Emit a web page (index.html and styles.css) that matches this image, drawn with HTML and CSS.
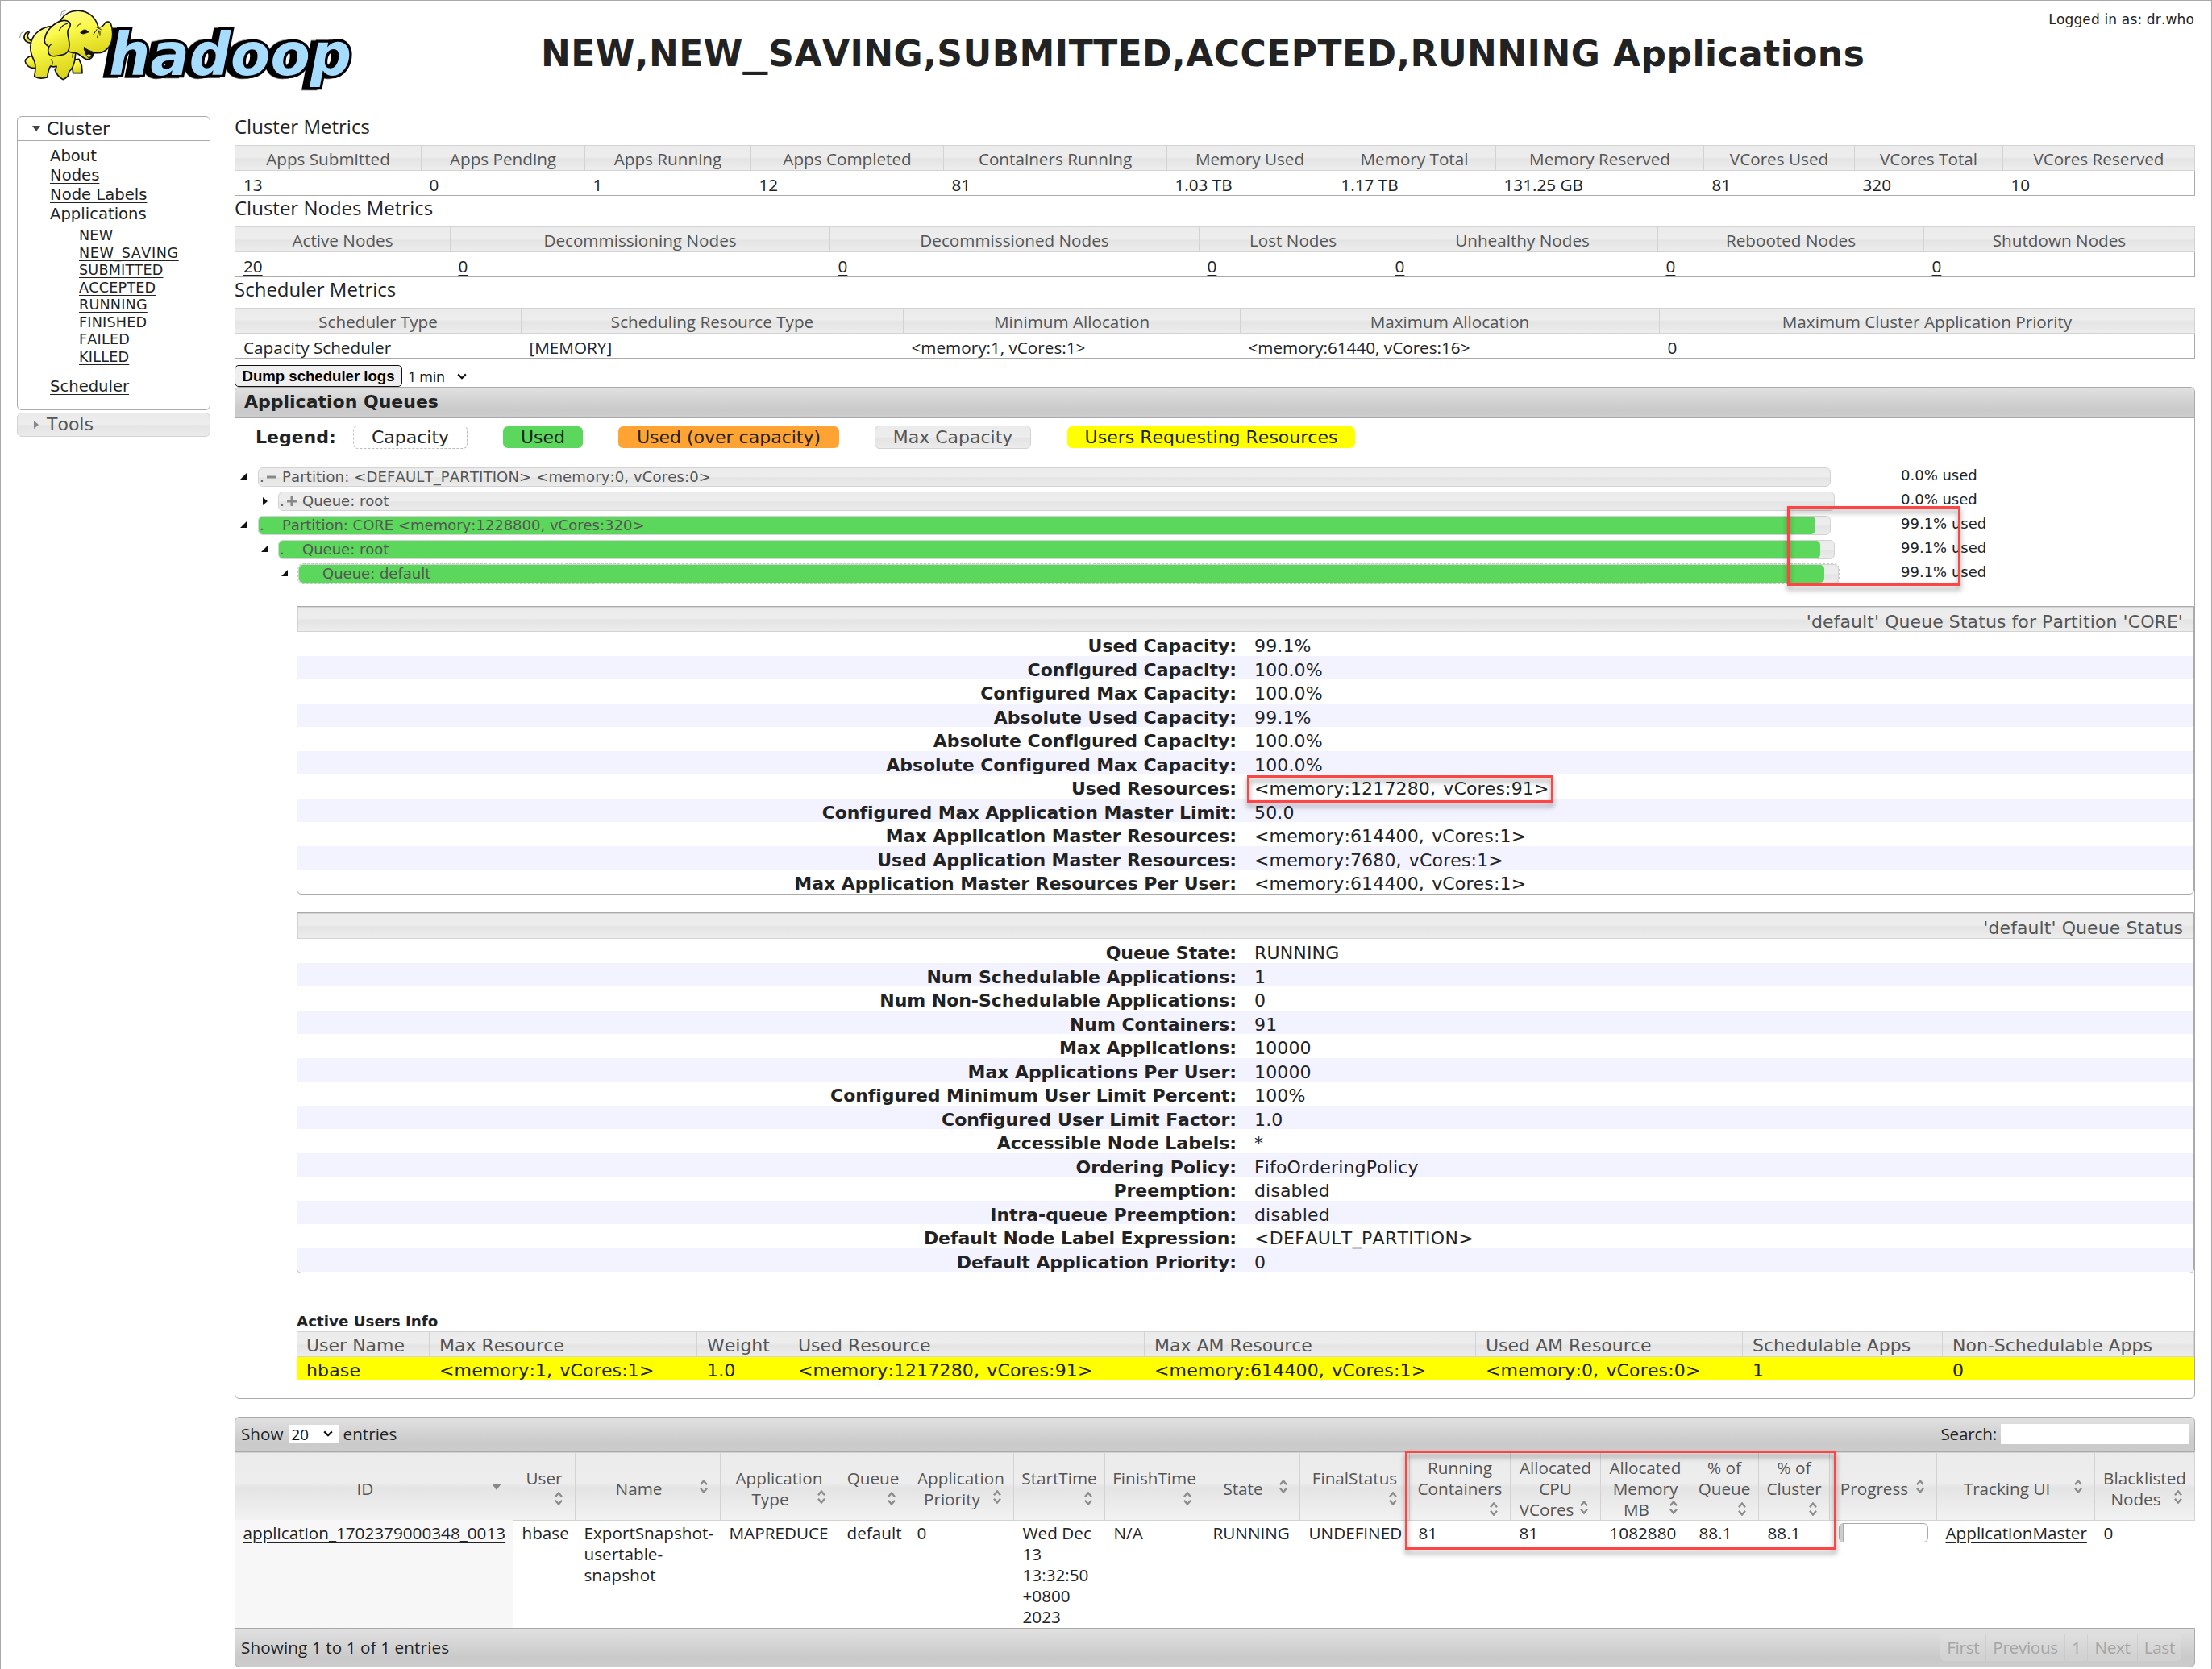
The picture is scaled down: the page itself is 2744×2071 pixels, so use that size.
FILE: index.html
```html
<!DOCTYPE html>
<html lang="en">
<head>
<meta charset="utf-8">
<title>NEW,NEW_SAVING,SUBMITTED,ACCEPTED,RUNNING Applications</title>
<link rel="stylesheet" href="styles.css">
</head>
<body>
<svg class="defs" width="0" height="0" aria-hidden="true">
  <symbol id="sort" viewBox="0 0 12 17">
    <path d="M2 6.2 6 1.4 10 6.2M2 10.8 6 15.6 10 10.8" fill="none" stroke="#8c8c8c" stroke-width="2.3"/>
  </symbol>
  <symbol id="chev" viewBox="0 0 12 8">
    <path d="M1.2 1.4 6 6.2 10.8 1.4" fill="none" stroke="#111" stroke-width="2.2"/>
  </symbol>
</svg>
<div class="page">
  <header class="top">
    <svg class="logo" viewBox="0 0 1290 336" role="img" aria-label="hadoop">
      <defs>
        <linearGradient id="skin" x1="0" y1="0" x2=".3" y2="1"><stop offset="0" stop-color="#fffd9a"/><stop offset=".45" stop-color="#fbf94a"/><stop offset="1" stop-color="#dcd71c"/></linearGradient>
      </defs>
      <text class="word" x="346" y="260" textLength="902" lengthAdjust="spacingAndGlyphs">hadoop</text>
      <g fill="url(#skin)" stroke="#111" stroke-width="5" stroke-linejoin="round" stroke-linecap="round">
        <path d="M57 142C40 142 28 132 30 118 31 106 40 99 49 102 44 108 40 114 44 121 48 130 55 134 61 134"/>
        <path d="M206 206 212 254 246 254 244 226 234 202Z"/>
        <path d="M80 188 50 192C36 200 30 208 36 217 42 228 56 236 70 236L84 230"/>
        <path d="M133 80C100 82 66 102 56 138 50 160 56 188 68 210 74 226 72 248 68 266 82 276 100 274 116 270 118 254 120 240 128 228 136 232 146 230 150 228 152 236 146 238 144 240 148 254 158 268 174 278 182 276 188 270 192 266 196 258 194 254 198 248 208 240 214 224 218 208 220 196 220 188 222 178L170 84Z"/>
        <path d="M133 80C150 72 160 66 168 54 182 32 206 20 236 22 268 24 296 44 306 84 318 84 326 78 332 66 338 60 350 64 352 70 364 104 360 138 344 158 332 174 312 182 290 178 288 194 276 206 260 202 250 198 240 188 226 180 212 180 204 178 196 174"/>
        <path d="M133 80C150 66 172 54 190 60 204 66 206 74 194 92 186 102 198 124 198 150 198 170 188 184 172 186 158 188 142 194 130 190 120 186 116 172 122 156 108 148 102 136 108 120 112 104 120 92 133 80Z"/>
        <path d="M160 96C168 80 176 72 190 70M122 156C126 150 130 148 132 146M132 228C140 212 134 208 130 204M214 176C210 184 208 188 210 196" fill="none" stroke-width="3.5"/>
        <path d="M300 84 316 92M300 92 288 110M308 96 302 122M312 98 312 114M226 84C230 74 236 70 242 72" fill="none" stroke-width="3"/>
        <path d="M240 104C244 92 258 90 264 96L270 102 258 106C250 110 244 108 240 104Z" fill="#111" stroke-width="2"/>
        <path d="M254 158C262 168 274 170 288 176 288 188 280 198 268 196 258 192 262 176 254 168Z" fill="#111" stroke-width="3"/>
        <path d="M262 188C268 182 276 184 280 190 276 196 266 196 262 188Z" fill="#f4f03a" stroke="none"/>
        <path d="M166 42 170 26 184 22M174 34 180 28M14 122 18 106 28 100" fill="none" stroke="#999" stroke-width="3"/>
      </g>
    </svg>
    <h1>NEW,NEW<i class="us">_</i>SAVING,SUBMITTED,ACCEPTED,RUNNING Applications</h1>
    <div class="login">Logged in as: dr.who</div>
  </header>

  <div class="body">
    <nav class="side">
      <section class="side-box">
        <h2><svg width="10" height="7" viewBox="0 0 10 7"><path d="M0 0H10L5 7Z" fill="#444"/></svg>Cluster</h2>
        <ul>
          <li><a>About</a></li>
          <li><a>Nodes</a></li>
          <li><a>Node Labels</a></li>
          <li><a>Applications</a>
            <ul>
              <li><a>NEW</a></li>
              <li><a class="wide">NEW_SAVING</a></li>
              <li><a>SUBMITTED</a></li>
              <li><a>ACCEPTED</a></li>
              <li><a>RUNNING</a></li>
              <li><a>FINISHED</a></li>
              <li><a>FAILED</a></li>
              <li><a>KILLED</a></li>
            </ul>
          </li>
          <li><a>Scheduler</a></li>
        </ul>
      </section>
      <h2 class="tools"><svg width="7" height="10" viewBox="0 0 7 10"><path d="M0 0V10L6 5Z" fill="#888"/></svg>Tools</h2>
    </nav>

    <main>
      <h3>Cluster Metrics</h3>
      <div class="metrics m1">
        <b>Apps Submitted</b><b>Apps Pending</b><b>Apps Running</b><b>Apps Completed</b><b>Containers Running</b><b>Memory Used</b><b>Memory Total</b><b>Memory Reserved</b><b>VCores Used</b><b>VCores Total</b><b>VCores Reserved</b>
        <span>13</span><span>0</span><span>1</span><span>12</span><span>81</span><span>1.03 TB</span><span>1.17 TB</span><span>131.25 GB</span><span>81</span><span>320</span><span>10</span>
      </div>
      <h3>Cluster Nodes Metrics</h3>
      <div class="metrics m2">
        <b>Active Nodes</b><b>Decommissioning Nodes</b><b>Decommissioned Nodes</b><b>Lost Nodes</b><b>Unhealthy Nodes</b><b>Rebooted Nodes</b><b>Shutdown Nodes</b>
        <span><a>20</a></span><span><a>0</a></span><span><a>0</a></span><span><a>0</a></span><span><a>0</a></span><span><a>0</a></span><span><a>0</a></span>
      </div>
      <h3>Scheduler Metrics</h3>
      <div class="metrics m3">
        <b>Scheduler Type</b><b>Scheduling Resource Type</b><b>Minimum Allocation</b><b>Maximum Allocation</b><b>Maximum Cluster Application Priority</b>
        <span>Capacity Scheduler</span><span>[MEMORY]</span><span>&lt;memory:1, vCores:1&gt;</span><span>&lt;memory:61440, vCores:16&gt;</span><span>0</span>
      </div>

      <div class="dump">
        <button>Dump scheduler logs</button>
        <span>1 min</span>
        <svg width="12" height="8"><use href="#chev"/></svg>
      </div>

      <section class="queues">
        <h4>Application Queues</h4>
        <div class="legend">
          <strong>Legend:</strong>
          <span class="lg cap">Capacity</span>
          <span class="lg used">Used</span>
          <span class="lg over">Used (over capacity)</span>
          <span class="lg max">Max Capacity</span>
          <span class="lg req">Users Requesting Resources</span>
        </div>

        <div class="tree">
          <div class="row l1">
            <i class="arrow"><svg width="8" height="8"><path d="M8 0V8H0Z"/></svg></i>
            <div class="bar"><div class="fill none"><span class="pre">.<svg width="13" height="14"><path d="M1 7H13" stroke="#888" stroke-width="3"/></svg></span><span class="part">Partition: &lt;DEFAULT_PARTITION&gt; &lt;memory:0, vCores:0&gt;</span></div></div>
            <span class="pct">0.0% used</span>
          </div>
          <div class="row l2">
            <i class="arrow"><svg width="6" height="10"><path d="M0 0V10L6 5Z"/></svg></i>
            <div class="bar"><div class="fill none"><span class="pre">.<svg width="13" height="14"><path d="M1 7H13M7 1V13" stroke="#888" stroke-width="3"/></svg></span>Queue: root</div></div>
            <span class="pct">0.0% used</span>
          </div>
          <div class="row l1">
            <i class="arrow"><svg width="8" height="8"><path d="M8 0V8H0Z"/></svg></i>
            <div class="bar"><div class="fill" style="width:99.1%"><span class="pre">.</span>Partition: CORE &lt;memory:1228800, vCores:320&gt;</div></div>
            <span class="pct">99.1% used</span>
          </div>
          <div class="row l2">
            <i class="arrow"><svg width="8" height="8"><path d="M8 0V8H0Z"/></svg></i>
            <div class="bar"><div class="fill" style="width:99.1%"><span class="pre">.</span>Queue: root</div></div>
            <span class="pct">99.1% used</span>
          </div>
          <div class="row l3">
            <i class="arrow"><svg width="8" height="8"><path d="M8 0V8H0Z"/></svg></i>
            <div class="bar leaf"><div class="fill" style="width:99.1%"><span class="pre"></span>Queue: default</div></div>
            <span class="pct">99.1% used</span>
          </div>
        </div>

        <div class="panel p1">
          <h5>'default' Queue Status for Partition 'CORE'</h5>
          <dl>
            <div><dt>Used Capacity:</dt><dd>99.1%</dd></div>
            <div><dt>Configured Capacity:</dt><dd>100.0%</dd></div>
            <div><dt>Configured Max Capacity:</dt><dd>100.0%</dd></div>
            <div><dt>Absolute Used Capacity:</dt><dd>99.1%</dd></div>
            <div><dt>Absolute Configured Capacity:</dt><dd>100.0%</dd></div>
            <div><dt>Absolute Configured Max Capacity:</dt><dd>100.0%</dd></div>
            <div><dt>Used Resources:</dt><dd>&lt;memory:1217280, vCores:91&gt;</dd></div>
            <div><dt>Configured Max Application Master Limit:</dt><dd>50.0</dd></div>
            <div><dt>Max Application Master Resources:</dt><dd>&lt;memory:614400, vCores:1&gt;</dd></div>
            <div><dt>Used Application Master Resources:</dt><dd>&lt;memory:7680, vCores:1&gt;</dd></div>
            <div><dt>Max Application Master Resources Per User:</dt><dd>&lt;memory:614400, vCores:1&gt;</dd></div>
          </dl>
        </div>

        <div class="panel p2">
          <h5>'default' Queue Status</h5>
          <dl>
            <div><dt>Queue State:</dt><dd>RUNNING</dd></div>
            <div><dt>Num Schedulable Applications:</dt><dd>1</dd></div>
            <div><dt>Num Non-Schedulable Applications:</dt><dd>0</dd></div>
            <div><dt>Num Containers:</dt><dd>91</dd></div>
            <div><dt>Max Applications:</dt><dd>10000</dd></div>
            <div><dt>Max Applications Per User:</dt><dd>10000</dd></div>
            <div><dt>Configured Minimum User Limit Percent:</dt><dd>100%</dd></div>
            <div><dt>Configured User Limit Factor:</dt><dd>1.0</dd></div>
            <div><dt>Accessible Node Labels:</dt><dd>*</dd></div>
            <div><dt>Ordering Policy:</dt><dd>FifoOrderingPolicy</dd></div>
            <div><dt>Preemption:</dt><dd>disabled</dd></div>
            <div><dt>Intra-queue Preemption:</dt><dd>disabled</dd></div>
            <div><dt>Default Node Label Expression:</dt><dd class="part">&lt;DEFAULT_PARTITION&gt;</dd></div>
            <div><dt>Default Application Priority:</dt><dd>0</dd></div>
          </dl>
        </div>

        <h6>Active Users Info</h6>
        <div class="users">
          <b>User Name</b><b>Max Resource</b><b>Weight</b><b>Used Resource</b><b>Max AM Resource</b><b>Used AM Resource</b><b>Schedulable Apps</b><b>Non-Schedulable Apps</b>
          <span>hbase</span><span>&lt;memory:1, vCores:1&gt;</span><span>1.0</span><span>&lt;memory:1217280, vCores:91&gt;</span><span>&lt;memory:614400, vCores:1&gt;</span><span>&lt;memory:0, vCores:0&gt;</span><span>1</span><span>0</span>
        </div>
      </section>

      <section class="apps">
        <div class="bar-top">
          <span>Show</span>
          <span class="select">20<svg width="12" height="8"><use href="#chev"/></svg></span>
          <span>entries</span>
          <span class="search">Search:</span>
          <span class="input"></span>
        </div>
        <div class="grid head">
          <div><p class="s"><span>ID</span><svg class="one" viewBox="0 0 12 17"><path d="M0 5H12L6 13Z" fill="#888"/></svg></p></div>
          <div><p>User</p><p class="s o"><span></span><svg><use href="#sort"/></svg></p></div>
          <div><p class="s"><span>Name</span><svg><use href="#sort"/></svg></p></div>
          <div><p>Application</p><p class="s"><span>Type</span><svg><use href="#sort"/></svg></p></div>
          <div><p>Queue</p><p class="s o"><span></span><svg><use href="#sort"/></svg></p></div>
          <div><p>Application</p><p class="s"><span>Priority</span><svg><use href="#sort"/></svg></p></div>
          <div><p>StartTime</p><p class="s o"><span></span><svg><use href="#sort"/></svg></p></div>
          <div><p>FinishTime</p><p class="s o"><span></span><svg><use href="#sort"/></svg></p></div>
          <div><p class="s"><span>State</span><svg><use href="#sort"/></svg></p></div>
          <div><p>FinalStatus</p><p class="s o"><span></span><svg><use href="#sort"/></svg></p></div>
          <div><p>Running</p><p>Containers</p><p class="s o"><span></span><svg><use href="#sort"/></svg></p></div>
          <div><p>Allocated</p><p>CPU</p><p class="s"><span>VCores</span><svg><use href="#sort"/></svg></p></div>
          <div><p>Allocated</p><p>Memory</p><p class="s"><span>MB</span><svg><use href="#sort"/></svg></p></div>
          <div><p>% of</p><p>Queue</p><p class="s o"><span></span><svg><use href="#sort"/></svg></p></div>
          <div><p>% of</p><p>Cluster</p><p class="s o"><span></span><svg><use href="#sort"/></svg></p></div>
          <div><p class="s"><span>Progress</span><svg><use href="#sort"/></svg></p></div>
          <div><p class="s"><span>Tracking UI</span><svg><use href="#sort"/></svg></p></div>
          <div><p>Blacklisted</p><p class="s"><span>Nodes</span><svg><use href="#sort"/></svg></p></div>
        </div>
        <div class="grid data">
          <div class="sorted"><a>application_1702379000348_0013</a></div>
          <div>hbase</div>
          <div>ExportSnapshot-<br>usertable-<br>snapshot</div>
          <div>MAPREDUCE</div>
          <div>default</div>
          <div>0</div>
          <div>Wed Dec<br>13<br>13:32:50<br>+0800<br>2023</div>
          <div>N/A</div>
          <div>RUNNING</div>
          <div>UNDEFINED</div>
          <div>81</div>
          <div>81</div>
          <div>1082880</div>
          <div>88.1</div>
          <div>88.1</div>
          <div><div class="progress"><i style="width:5%"></i></div></div>
          <div><a>ApplicationMaster</a></div>
          <div>0</div>
        </div>
        <div class="bar-bottom">
          <span>Showing 1 to 1 of 1 entries</span>
          <div class="pager"><span>First</span><span>Previous</span><span>1</span><span>Next</span><span>Last</span></div>
        </div>
      </section>
    </main>
  </div>

  <div class="mark mark-capacity"></div>
  <div class="mark mark-resources"></div>
  <div class="mark mark-alloc"></div>
</div>
</body>
</html>
```
FILE: styles.css
```css
* { box-sizing: border-box; }
body { margin: 0; background: #fff; }
h1, h2, h3, h4, h5, h6, p, ul, dl, dd { margin: 0; padding: 0; }
ul { list-style: none; }
svg { display: block; flex: none; }
a { text-decoration: underline; }
.defs { position: absolute; }

.page {
  position: relative;
  width: 2744px;
  height: 2071px;
  overflow: hidden;
  border: 1px solid #a9a9a9;
  border-bottom: 0;
  font-family: "DejaVu Sans", Verdana, sans-serif;
  font-size: 22px;
  font-kerning: none;
  color: #222;
}

/* header */
.top { display: flex; height: 141px; padding: 5px 21px 0 19px; }
.logo { width: 430px; height: 112px; overflow: visible; }
.word { font: italic bold 218px "DejaVu Sans", sans-serif; fill: #a5dcff; stroke: #000; stroke-width: 20; paint-order: stroke; filter: drop-shadow(-18px 2px 0 #000); }
h1 { margin-left: 221px; font-size: 44px; line-height: 60px; padding-top: 31px; height: 110px; letter-spacing: .45px; white-space: nowrap; }
.us { display: inline-block; font-style: normal; transform: scaleX(1.42); margin: 0 4.6px; }
.login { margin-left: auto; font-size: 17px; line-height: 20px; padding-top: 8px; letter-spacing: .15px; white-space: nowrap; }

/* sidebar */
.body { display: flex; }
.side { width: 240px; margin: 2px 30px 0 20px; flex: none; }
.side-box { height: 365px; border: 1px solid #aaa; border-radius: 6px; }
.side h2 { display: flex; align-items: center; font-size: 22px; font-weight: normal; line-height: 29px; padding-left: 18px; gap: 8px; }
.side-box h2 { height: 30px; border-bottom: 1px solid #aaa; }
.side-box > ul { padding: 7px 0 0 40px; font-size: 19.6px; line-height: 24px; }
.side-box ul ul { padding: 4px 0 14px 36px; font-size: 17.6px; line-height: 21.5px; letter-spacing: .2px; }
.side .wide { letter-spacing: .6px; }
.side a { text-decoration-thickness: 1px; text-underline-offset: 3px; }
.side .tools {
  margin-top: 3px; height: 30px; line-height: 28px; padding-left: 20px; gap: 9px; color: #555;
  border: 1px solid #d3d3d3; border-radius: 6px;
  background: linear-gradient(#ebebeb, #ededed 48%, #e4e4e4 54%, #ebebeb);
}

/* metrics */
main { width: 2432px; flex: none; font-family: "Open Sans", "Segoe UI", sans-serif; font-size: 20.7px; font-kerning: auto; }
h3 { font-size: 24px; font-weight: normal; line-height: 30px; height: 38px; white-space: nowrap; }
.metrics { display: grid; grid-template-rows: 32px 31px; height: 63px; border: 1px solid #aaa; border-width: 0 1px 1px; white-space: nowrap; }
.metrics b, .users b {
  font-weight: normal; color: #555;
  border: 1px solid #d3d3d3; border-left-width: 0;
  background: linear-gradient(#ebebeb, #ededed 45%, #e4e4e4 55%, #ededed);
}
.metrics b { text-align: center; line-height: 32px; margin-right: -1px; margin-left: 1px; }
.metrics b:first-child { border-left-width: 1px; margin-left: -1px; }
.metrics span { padding: 4px 0 0 10.5px; line-height: 26px; }
.metrics span:nth-of-type(1) { padding-left: 10px; }
.metrics a, .data a { text-decoration-thickness: 2px; text-underline-offset: 3px; }
.m1 { grid-template-columns: 230px 203px 206px 239px 277px 206px 202px 258px 187px 184px 238px; }
.m2 { grid-template-columns: 266px 471px 458px 233px 336px 330px 336px; }
.m3 { grid-template-columns: 354px 474px 418px 520px 664px; }

.dump { display: flex; align-items: center; height: 27px; margin-top: 8px; color: #111; }
.dump button { width: 208px; height: 27px; padding: 0; margin-right: 7px; border: 1.5px solid #111; border-radius: 5px; background: #efefef; font: bold 18.6px "Liberation Sans", Arial, sans-serif; color: #000; white-space: nowrap; }
.dump span { width: 61px; font-size: 18px; letter-spacing: -.3px; line-height: 26px; }

/* queues */
.queues { height: 1256px; border: 1px solid #aaa; border-radius: 6px; font-family: "DejaVu Sans", Verdana, sans-serif; font-size: 22px; font-kerning: none; }
h4 { height: 38px; line-height: 35px; padding-left: 11px; font-size: 22px; border-bottom: 2px solid #aaa; border-radius: 5px 5px 0 0; background: linear-gradient(#e1e1e1, #cacaca 75%, #cccccc); }
.legend { display: flex; align-items: center; height: 29px; margin-top: 9px; padding-left: 25px; }
.legend strong { width: 99px; margin-right: 22px; }
.lg { height: 27px; line-height: 27px; border-radius: 6px; text-align: center; white-space: nowrap; margin-right: 44px; }
.cap { width: 142px; height: 29px; border: 1px dashed #bbb; }
.used { width: 99px; background: #5bd75b; }
.over { width: 274px; background: #ffa333; }
.max { width: 194px; height: 29px; border: 1px solid #d3d3d3; color: #555; background: linear-gradient(#ebebeb, #ededed 48%, #e4e4e4 54%, #ebebeb); }
.req { width: 357px; margin-left: 1px; background: #ffff00; }

.tree { margin-top: 23px; font-size: 18px; }
.row { display: flex; height: 30px; white-space: nowrap; }
.arrow { display: flex; justify-content: flex-end; padding: 7px 13px 0 0; flex: none; }
.arrow path { fill: #111; }
.l1 .arrow { width: 28px; padding-right: 14px; } .l2 .arrow { width: 53px; } .l3 .arrow { width: 78px; }
.l1 .bar { width: 1951px; } .l2 .bar { width: 1931px; } .l3 .bar { width: 1911px; }
.bar { height: 24px; border: 1px solid #d3d3d3; border-radius: 6px; background: linear-gradient(#ebebeb, #ededed 48%, #e4e4e4 54%, #ebebeb); }
.bar.leaf { outline: 1px dashed #c4c4c4; outline-offset: 0; }
.fill { display: flex; height: 22px; line-height: 22px; border-radius: 5px; background: #5bd75b; color: #555; }
.fill.none { background: none; }
.pre { display: flex; align-items: center; width: 29px; padding-left: 1px; gap: 2px; }
.fill .part { letter-spacing: .15px; }
.pct { margin-left: auto; width: 364px; line-height: 20px; }

.panel { margin-left: 76px; border: 1px solid #aaa; border-radius: 0 0 6px 6px; overflow: hidden; white-space: nowrap; }
.p1 { margin-top: 22px; height: 358px; }
.p2 { margin-top: 22px; height: 448px; }
h5 { height: 31px; line-height: 35px; padding-right: 12px; text-align: right; font-size: 22px; font-weight: normal; letter-spacing: .08px; color: #555; border: 1px solid #d3d3d3; background: linear-gradient(#ebebeb, #ededed 45%, #e4e4e4 55%, #ededed); }
.p2 h5 { height: 32px; }
dl div { display: flex; height: 29.5px; padding-top: 7px; line-height: 22.5px; }
dl div:nth-child(even) { background: #f3f2ff; }
dt { width: 1165px; text-align: right; font-weight: bold; letter-spacing: -.05px; }
dd { padding-left: 22px; letter-spacing: .15px; word-spacing: 2px; }
dd.part { letter-spacing: .35px; }

h6 { margin: 48px 0 0 76px; height: 24px; line-height: 24px; font-size: 18.3px; }
.users { display: grid; grid-template-rows: 32px 29px; grid-template-columns: 165px 332px 113px 442px 411px 331px 248px 312px; margin-left: 76px; white-space: nowrap; }
.users b { line-height: 34px; padding-left: 12px; }
.users b:first-child { border-left-width: 1px; padding-left: 11px; }
.users span { background: #ffff00; padding: 5px 0 0 12px; line-height: 24px; letter-spacing: .15px; word-spacing: 2px; }

/* applications table */
.apps { margin-top: 22px; }
.bar-top, .bar-bottom { display: flex; border: 1px solid #aaa; background: linear-gradient(#e1e1e1, #cacaca 75%, #cccccc); line-height: 26px; }
.bar-top { height: 44px; align-items: center; padding: 0 7px 2px; border-radius: 6px 6px 0 0; }
.select { display: flex; align-items: center; justify-content: space-between; width: 62px; height: 23px; line-height: 23px; padding: 0 7px 0 4px; margin: 0 6px 0 6px; background: #fff; color: #111; font-size: 18.7px; }
.search { margin-left: auto; letter-spacing: -.2px; }
.input { width: 233px; height: 25px; margin-left: 5px; background: #fff; }
.grid { display: grid; grid-template-columns: 346px 77px 180px 146px 87px 131px 113px 123px 119px 136px 125px 112px 111px 85px 88px 133px 196px 124px; white-space: nowrap; line-height: 26px; }
.head { height: 84px; color: #555; }
.head > div { display: flex; flex-direction: column; justify-content: center; padding-top: 5px; text-align: center; border: 1px solid #d3d3d3; border-left-width: 0; background: linear-gradient(#ebebeb, #ededed 45%, #e4e4e4 52%, #f2f2f2); }
.head > div:first-child { border-left-width: 1px; }
.head .s { display: flex; align-items: center; height: 26px; }
.head .s span { flex: 1; }
.head svg { width: 12px; height: 17px; margin: -6px 14px 0 -4px; }
.head .o svg { margin-top: -2px; }
.data { height: 134px; }
.data > div { padding: 3px 0 0 10.5px; }
.data .sorted { background: #f7f7f7; }
.data .progress { width: 111px; height: 24px; margin-top: 1px; border: 1px solid #aaa; border-radius: 6px; overflow: hidden; }
.progress i { display: block; height: 100%; background: #d0d0d0; border-right: 1px solid #aaa; }
.bar-bottom { height: 49px; border-radius: 0 0 6px 6px; padding: 7px 16px 0 7px; justify-content: space-between; }
.bar-bottom > span { padding-top: 3px; letter-spacing: .1px; }
.pager { display: flex; height: 33px; line-height: 33px; border-radius: 6px; background: rgba(230, 230, 230, .3); color: #a5a5a5; letter-spacing: -.3px; }
.pager span { padding: 0 8px; border-right: 1px solid rgba(190, 190, 190, .4); }
.pager span:last-child { border: 0; }

/* highlight frames */
.mark { position: absolute; border: 3px solid #ff4444; filter: drop-shadow(0 5px 3px rgba(0, 0, 0, .4)); }
.mark-capacity { left: 2216px; top: 627px; width: 215px; height: 99px; }
.mark-resources { left: 1546px; top: 961px; width: 380px; height: 34px; }
.mark-alloc { left: 1742px; top: 1799px; width: 535px; height: 123px; }
```
